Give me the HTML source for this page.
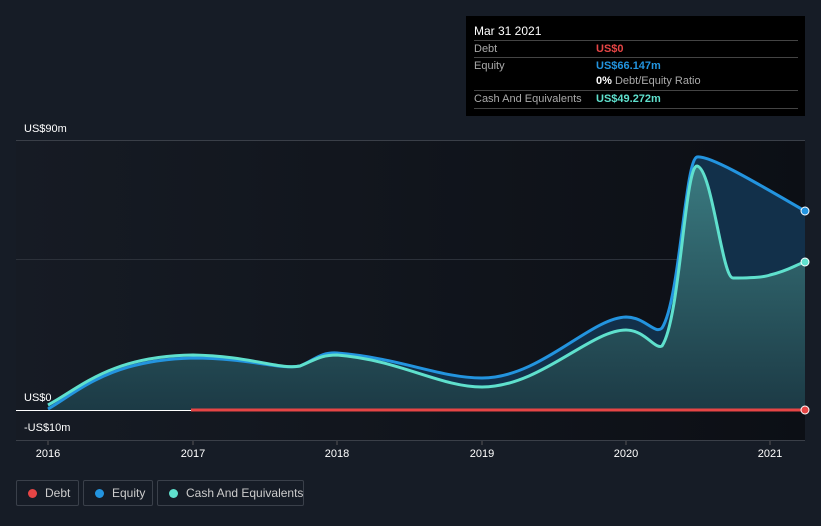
<!DOCTYPE html>
<html><head><meta charset="utf-8"><style>
html,body{margin:0;width:821px;height:526px;overflow:hidden}
body{background:#161c26;font-family:"Liberation Sans",sans-serif;position:relative}
.t{position:absolute;color:#fff;font-size:11px;white-space:nowrap}
.tip{position:absolute;left:466px;top:16px;width:339px;height:100px;background:#000}
.row{position:absolute;left:8px;width:324px;border-top:1px solid #444;font-size:11px;color:#aaa;height:17px;line-height:17px;white-space:nowrap}
.leg{position:absolute;top:480px;height:26px;border:1px solid #3a404a;border-radius:2px;color:#ccc;font-size:12px;line-height:24px;box-sizing:border-box;white-space:nowrap;overflow:hidden}
.leg i{display:inline-block;width:9px;height:9px;border-radius:50%;margin:0 8px 0 11px;vertical-align:-1px}
</style></head><body>
<svg width="821" height="526" style="position:absolute;left:0;top:0">
<defs>
<linearGradient id="bg" x1="0" x2="1"><stop offset="0" stop-color="#161b24"/><stop offset="1" stop-color="#0c0f15"/></linearGradient>
<linearGradient id="cf" x1="0" y1="0" x2="0" y2="1"><stop offset="0" stop-color="#3a7a80"/><stop offset="1" stop-color="#1c3a45"/></linearGradient>
</defs>
<rect x="16" y="140" width="789" height="300" fill="url(#bg)"/>
<line x1="16" y1="140.5" x2="805" y2="140.5" stroke="#3a3f48"/>
<line x1="16" y1="259.5" x2="805" y2="259.5" stroke="#2c313a"/>
<line x1="16" y1="440.5" x2="805" y2="440.5" stroke="#3a3f48"/>
<path d="M48,409 C80,390 110,360 193,358 C250,358 280,370 300,366 C315,360 320,352 337,353 C400,358 440,378 482,378 C540,378 590,318 626,317 C645,317 655,335 662,328 C680,300 685,160 697,157 C710,155 760,185 805,211 L805,410 L48,410Z" fill="#12304a"/>
<path d="M48,405 C80,388 110,356 193,355 C250,356 280,370 300,366 C315,360 320,355 337,355 C400,360 440,387 482,387 C540,387 590,330 626,330 C645,330 655,350 662,346 C680,320 685,165 697,166 C712,168 722,278 733,278 C750,278 765,277 770,275 C790,270 795,265 805,262 L805,410 L48,410Z" fill="url(#cf)"/>
<path d="M48,409 C80,390 110,360 193,358 C250,358 280,370 300,366 C315,360 320,352 337,353 C400,358 440,378 482,378 C540,378 590,318 626,317 C645,317 655,335 662,328 C680,300 685,160 697,157 C710,155 760,185 805,211" fill="none" stroke="#2394df" stroke-width="3"/>
<path d="M48,405 C80,388 110,356 193,355 C250,356 280,370 300,366 C315,360 320,355 337,355 C400,360 440,387 482,387 C540,387 590,330 626,330 C645,330 655,350 662,346 C680,320 685,165 697,166 C712,168 722,278 733,278 C750,278 765,277 770,275 C790,270 795,265 805,262" fill="none" stroke="#5fe0cd" stroke-width="3"/>
<line x1="16" y1="410.5" x2="805" y2="410.5" stroke="#fff"/>
<line x1="191" y1="410" x2="805" y2="410" stroke="#e64545" stroke-width="3"/>
<circle cx="805" cy="211" r="4" fill="#2394df" stroke="#fff"/>
<circle cx="805" cy="262" r="4" fill="#5fe0cd" stroke="#fff"/>
<circle cx="805" cy="410" r="4" fill="#e64545" stroke="#fff"/>
<g stroke="#555"><line x1="48" y1="441" x2="48" y2="445"/><line x1="193" y1="441" x2="193" y2="445"/><line x1="337" y1="441" x2="337" y2="445"/><line x1="482" y1="441" x2="482" y2="445"/><line x1="626" y1="441" x2="626" y2="445"/><line x1="770" y1="441" x2="770" y2="445"/></g>
<g fill="#fff" font-size="11" font-family="Liberation Sans" text-anchor="middle">
<text x="48" y="457">2016</text><text x="193" y="457">2017</text><text x="337" y="457">2018</text><text x="482" y="457">2019</text><text x="626" y="457">2020</text><text x="770" y="457">2021</text></g>
</svg>
<div class="t" style="left:24px;top:123px">US$90m</div>
<div class="t" style="left:24px;top:392px">US$0</div>
<div class="t" style="left:24px;top:422px">-US$10m</div>
<div class="tip">
<div class="t" style="left:8px;top:8px;font-size:12px">Mar 31 2021</div>
<div class="row" style="top:24px">Debt<span style="position:absolute;left:122px;color:#e64545;font-weight:bold">US$0</span></div>
<div class="row" style="top:41px">Equity<span style="position:absolute;left:122px;color:#2394df;font-weight:bold">US$66.147m</span></div>
<div class="row" style="top:57px;border:0"><span style="position:absolute;left:122px"><b style="color:#fff">0%</b> Debt/Equity Ratio</span></div>
<div class="row" style="top:74px;border-bottom:1px solid #444">Cash And Equivalents<span style="position:absolute;left:122px;color:#5fe0cd;font-weight:bold">US$49.272m</span></div>
</div>
<div class="leg" style="left:16px;width:63px"><i style="background:#e64545"></i>Debt</div>
<div class="leg" style="left:83px;width:70px"><i style="background:#2394df"></i>Equity</div>
<div class="leg" style="left:157px;width:147px"><i style="background:#5fe0cd"></i>Cash And Equivalents</div>
</body></html>
